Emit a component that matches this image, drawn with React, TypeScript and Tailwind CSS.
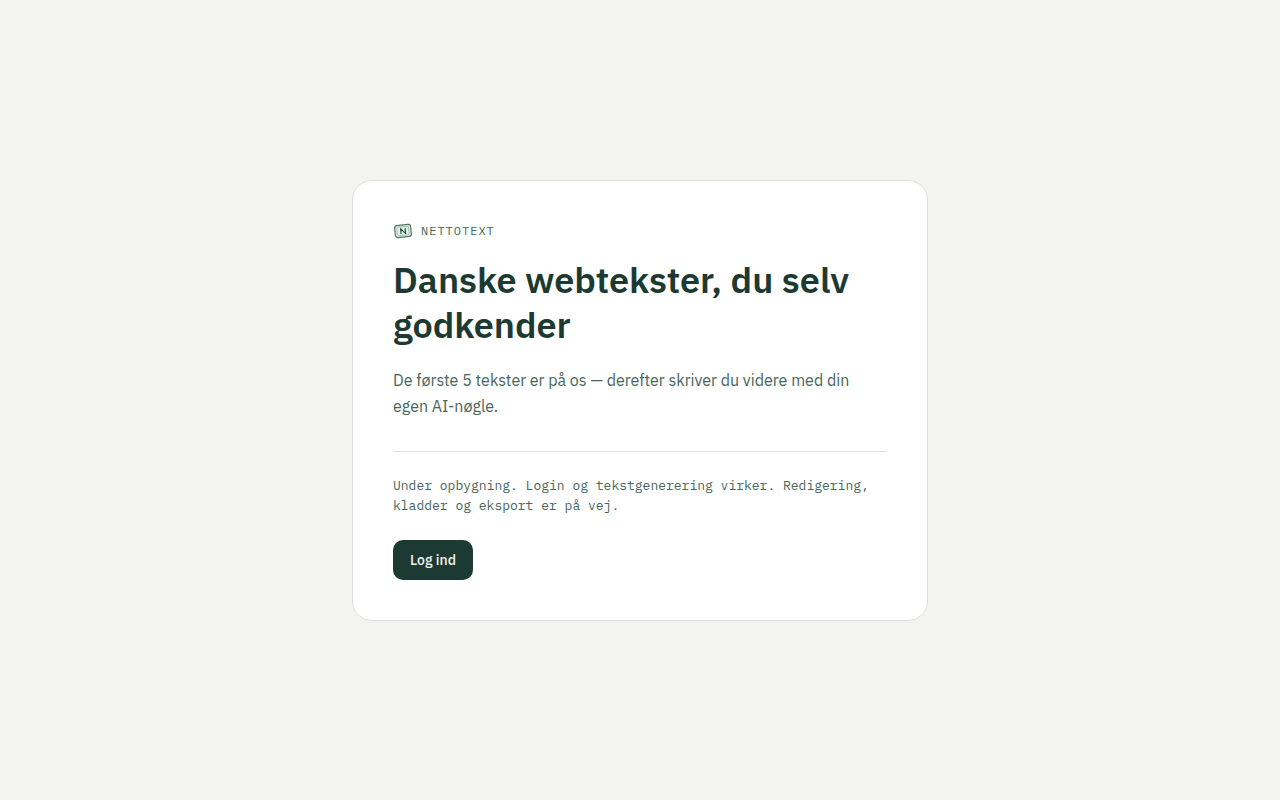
function BrandMark() {
  return (
    <svg viewBox="0 0 20 20" fill="none" stroke="#4a7562" className="h-5 w-5 shrink-0" aria-hidden="true">
      <g transform="rotate(-6 10 10)">
        <rect x="2" y="4" width="16" height="12" rx="2.4" fill="#e6f1eb" strokeWidth="1.2" />
        <rect x="4.2" y="5.8" width="11.6" height="8.4" rx="1" strokeWidth="0.4" />
        <path d="M7.8 12.8V7.4L12.4 12.8V7.4" stroke="#1d4a3a" strokeWidth="1.1" strokeLinejoin="round" />
      </g>
    </svg>
  );
}

export default function App() {
  return (
    <main className="flex min-h-screen items-center justify-center bg-[#f3f4ef] px-6 font-['IBM_Plex_Sans',Roboto,sans-serif]">
      <section className="w-full max-w-xl rounded-[20px] border border-[#dddfdb] bg-white p-10">
        <div className="flex items-center gap-2">
          <BrandMark />
          <span className="font-['IBM_Plex_Mono','Liberation_Mono',monospace] text-xs leading-5 tracking-[1px] text-[#3f6b59] uppercase">
            Nettotext
          </span>
        </div>

        <h1 className="mt-4 text-4xl leading-[45px] font-semibold text-[#1d3a32]">
          Danske webtekster, du selv godkender
        </h1>

        <p className="mt-5 text-base leading-[26px] text-[#48665b]">
          De første 5 tekster er på os — derefter skriver du videre med din egen AI-nøgle.
        </p>

        <div className="mt-8 border-t border-[#dddfdb] pt-6">
          <p className="font-['IBM_Plex_Mono','Liberation_Mono',monospace] text-[13px] leading-5 text-[#48665b]">
            Under opbygning. Login og tekstgenerering virker. Redigering, kladder og eksport er på vej.
          </p>
          <button
            type="button"
            className="mt-6 flex h-10 min-w-20 items-center justify-center rounded-[10px] bg-[#1d3a32] px-4 text-sm font-medium text-[#f3f4ef]"
          >
            Log ind
          </button>
        </div>
      </section>
    </main>
  );
}
